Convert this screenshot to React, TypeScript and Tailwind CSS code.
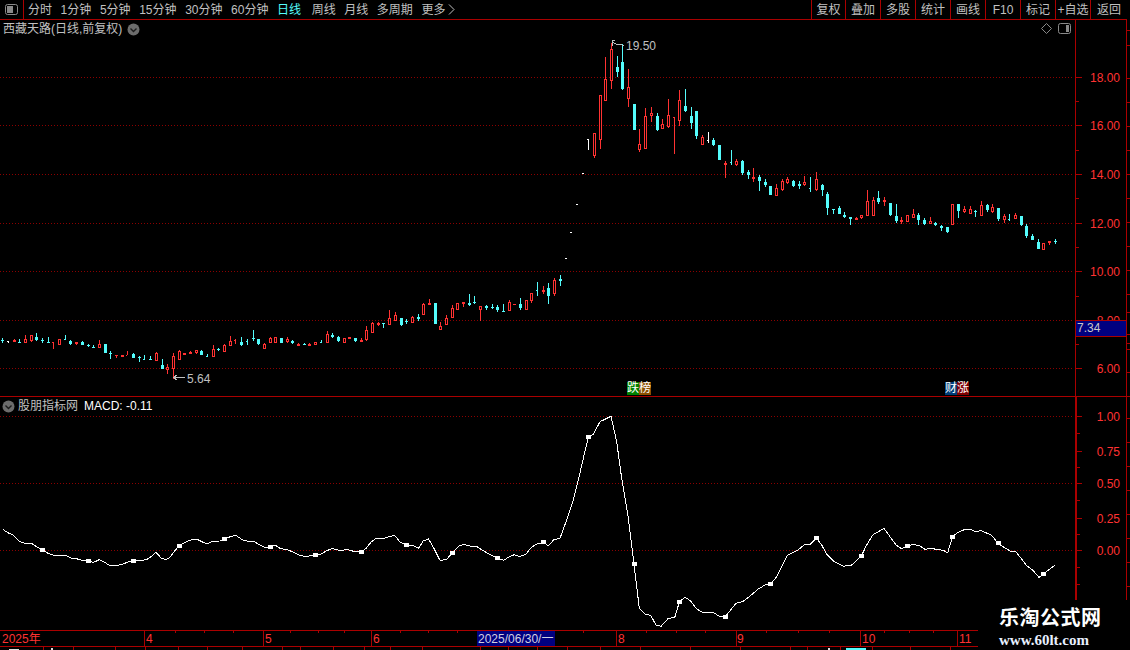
type Kind = 'r' | 'c' | 'w' | 'R' | 'C' | 'W';
type Row = [Kind, number, number, number, number];

const RED = '#ff3232';
const CYAN = '#54fcfc';
const LINE = '#aa0000';
const GRID = '#8c0000';
const GRAY = '#c0c0c0';
const fontStack = '"Liberation Sans", "Noto Sans CJK SC", sans-serif';

// [kind, wickTop, bodyTop, bodyBottom, wickBottom], measured at 3x from the top of each block
const blockA: Row[] = [
  ['c', 54, 60, 63, 68], ['W', 62, 62, 62, 70], ['r', 57, 59, 65, 65], ['c', 56, 66, 68, 68], ['r', 45, 57, 68, 69],
  ['r', 45, 45, 62, 67], ['c', 40, 51, 60, 62], ['c', 55, 59, 63, 68], ['c', 52, 65, 67, 67], ['R', 67, 67, 67, 87],
  ['r', 58, 58, 74, 74], ['C', 45, 58, 58, 60], ['c', 60, 62, 72, 75], ['r', 66, 66, 71, 75], ['c', 63, 65, 74, 75],
  ['c', 71, 74, 77, 81], ['c', 75, 80, 83, 83], ['r', 60, 72, 83, 84], ['c', 72, 72, 98, 98], ['c', 93, 99, 102, 117],
  ['r', 105, 105, 109, 113], ['r', 106, 106, 110, 110], ['R', 93, 105, 105, 105], ['c', 99, 102, 113, 114], ['c', 107, 110, 113, 125],
  ['C', 105, 118, 118, 120], ['c', 108, 116, 118, 118], ['r', 97, 100, 122, 123], ['c', 117, 134, 147, 147], ['r', 132, 141, 149, 162],
  ['r', 99, 108, 147, 178], ['r', 91, 93, 119, 120], ['r', 99, 99, 104, 104], ['r', 93, 96, 101, 101], ['r', 91, 91, 98, 103],
  ['c', 90, 93, 105, 106], ['C', 102, 108, 108, 110], ['r', 75, 88, 110, 111], ['c', 83, 87, 90, 93], ['r', 72, 75, 95, 96],
  ['r', 48, 63, 77, 78], ['R', 58, 60, 60, 71], ['c', 51, 65, 75, 77], ['C', 57, 64, 64, 74], ['c', 30, 53, 57, 63],
  ['c', 57, 57, 72, 75], ['r', 70, 72, 86, 87], ['r', 52, 54, 68, 70], ['r', 52, 52, 68, 68],
];

const blockB: Row[] = [
  ['c', 234, 234, 248, 248], ['r', 232, 237, 246, 250], ['c', 240, 242, 248, 252], ['r', 250, 252, 258, 258], ['c', 249, 252, 255, 255],
  ['r', 250, 252, 258, 258], ['r', 247, 247, 255, 255], ['C', 240, 246, 246, 248], ['r', 213, 222, 248, 249], ['c', 219, 225, 230, 234],
  ['c', 228, 230, 243, 246], ['r', 234, 234, 248, 248], ['r', 231, 231, 236, 236], ['c', 234, 234, 243, 246], ['r', 234, 240, 246, 246],
  ['r', 197, 210, 240, 243], ['r', 186, 189, 218, 219], ['r', 186, 188, 194, 198], ['c', 189, 189, 191, 204], ['r', 150, 175, 194, 195],
  ['r', 156, 165, 182, 183], ['c', 174, 174, 195, 198], ['c', 177, 182, 186, 192], ['r', 168, 171, 188, 188], ['c', 162, 170, 177, 182],
  ['r', 129, 132, 164, 165], ['r', 117, 129, 134, 134], ['c', 129, 129, 191, 191], ['r', 186, 198, 209, 209], ['r', 165, 174, 194, 195],
  ['r', 135, 144, 173, 174], ['r', 129, 129, 149, 149], ['r', 126, 126, 131, 141], ['c', 102, 129, 135, 137], ['c', 108, 126, 130, 132],
  ['r', 138, 138, 149, 183], ['c', 135, 138, 145, 150], ['c', 132, 141, 144, 147], ['c', 135, 140, 150, 156], ['c', 132, 152, 154, 156],
  ['r', 120, 126, 152, 153], ['r', 131, 131, 135, 135], ['c', 114, 132, 144, 150], ['r', 120, 120, 150, 150], ['r', 99, 99, 123, 129],
  ['C', 66, 91, 91, 108], ['r', 78, 90, 96, 102], ['c', 69, 84, 108, 132], ['r', 54, 60, 102, 108], ['c', 45, 57, 62, 78],
];

const blockC: Row[] = [
  ['w', 684, 684, 685, 685], ['w', 606, 606, 607, 607], ['w', 522, 522, 523, 523], ['w', 429, 429, 430, 430], ['W', 327, 327, 327, 360],
  ['r', 310, 310, 377, 383], ['r', 196, 196, 331, 357], ['r', 81, 148, 212, 212], ['r', 40, 57, 152, 177], ['c', 78, 111, 125, 142],
  ['c', 42, 96, 178, 180], ['r', 117, 172, 208, 231], ['c', 222, 222, 300, 300], ['r', 297, 343, 359, 366], ['r', 234, 259, 356, 357],
  ['r', 232, 249, 257, 276], ['c', 250, 258, 301, 303], ['r', 267, 283, 296, 297], ['r', 207, 256, 291, 293], ['R', 262, 262, 262, 372],
  ['r', 180, 211, 272, 288], ['c', 177, 228, 243, 246], ['c', 231, 258, 279, 297], ['c', 243, 243, 318, 327], ['r', 316, 321, 344, 345],
  ['W', 306, 331, 331, 339], ['c', 324, 331, 345, 348], ['c', 345, 345, 390, 390], ['r', 393, 399, 404, 444], ['C', 360, 397, 397, 405],
  ['r', 387, 393, 405, 408], ['c', 390, 393, 429, 435], ['c', 420, 426, 435, 447], ['r', 414, 441, 447, 456], ['c', 435, 441, 453, 483],
  ['c', 447, 456, 465, 471], ['c', 468, 468, 495, 495], ['r', 462, 474, 498, 498], ['r', 447, 453, 480, 483], ['r', 441, 447, 459, 462],
  ['c', 450, 453, 468, 471], ['c', 453, 462, 468, 477], ['r', 438, 456, 465, 468],
];

const blockD: Row[] = [
  ['C', 50, 85, 85, 96], ['r', 36, 57, 90, 93], ['c', 72, 75, 90, 108], ['c', 96, 102, 144, 165], ['c', 147, 147, 150, 162],
  ['c', 138, 144, 162, 162], ['c', 156, 165, 171, 174], ['c', 171, 171, 177, 195], ['r', 171, 174, 180, 180], ['r', 165, 165, 174, 177],
  ['r', 90, 123, 168, 168], ['r', 111, 120, 168, 168], ['c', 93, 114, 126, 132], ['r', 111, 120, 126, 138], ['c', 129, 129, 165, 168],
  ['c', 132, 168, 183, 189], ['r', 171, 180, 186, 192], ['r', 165, 165, 186, 186], ['r', 147, 162, 174, 174], ['c', 159, 165, 180, 195],
  ['c', 174, 180, 192, 195], ['r', 171, 183, 192, 192], ['c', 186, 189, 194, 198], ['c', 195, 198, 204, 213], ['c', 201, 201, 216, 219],
  ['r', 132, 132, 195, 195], ['c', 132, 132, 153, 174], ['r', 138, 147, 156, 159], ['r', 138, 147, 162, 162], ['c', 150, 153, 156, 171],
  ['r', 123, 135, 168, 168], ['c', 132, 135, 150, 156], ['r', 132, 141, 156, 159], ['c', 144, 144, 177, 183], ['r', 162, 168, 180, 189],
  ['C', 162, 178, 178, 183], ['r', 159, 165, 177, 177], ['c', 168, 168, 195, 198], ['c', 192, 198, 228, 234], ['c', 222, 228, 240, 240],
  ['c', 237, 246, 267, 267], ['r', 249, 249, 270, 270], ['r', 243, 243, 250, 255], ['c', 237, 242, 246, 252],
];

const place = (rows: Row[], base: number) =>
  rows.map(([k, a, b, c, d]) => [k, base + a / 3, base + b / 3, base + c / 3, base + d / 3] as Row);

const candles: Row[] = [...place(blockA, 320), ...place(blockB, 260), ...place(blockC, 30), ...place(blockD, 160)];

const candleX = (i: number) => Math.round(2.2 + 5.69 * i);

const macdLeft = [
  [8, 58], [22, 68], [38, 76], [55, 95], [70, 100], [88, 100], [105, 112], [119, 120], [135, 130], [150, 136], [185, 136], [200, 145],
  [217, 147], [235, 152], [248, 153], [262, 157], [278, 149], [290, 155], [305, 165], [330, 166], [345, 162], [360, 155], [374, 153],
  [395, 152], [412, 148], [425, 138], [437, 127], [452, 145], [465, 149], [475, 143], [490, 122], [503, 105], [520, 96], [540, 88],
  [552, 88], [565, 95], [580, 102], [595, 94], [615, 93], [628, 87], [645, 80], [660, 76], [680, 90], [695, 94], [710, 94], [725, 103],
  [740, 112], [757, 111], [770, 105], [785, 116], [805, 119], [820, 126], [840, 136], [855, 140], [882, 135], [900, 132], [915, 122],
  [930, 116], [950, 121], [975, 119], [990, 124], [1011, 126], [1025, 115], [1040, 95], [1055, 84], [1075, 85], [1090, 80], [1105, 76],
  [1120, 96], [1137, 105], [1155, 106], [1172, 115], [1185, 93], [1200, 87], [1215, 115], [1232, 151], [1250, 149], [1267, 128],
  [1285, 108], [1298, 103], [1315, 108], [1333, 108], [1350, 120], [1370, 133], [1393, 144], [1410, 151], [1425, 141], [1440, 134],
  [1455, 140], [1473, 132], [1485, 115], [1500, 103], [1522, 97], [1535, 108], [1550, 90], [1565, 85],
].map(([x, y]) => [x / 2.8, 510 + y / 3]);

const macdRight = [
  [0, 400], [20, 345], [40, 285], [55, 225], [70, 160], [85, 96], [100, 88], [120, 50], [153, 34], [170, 110], [185, 220], [205, 340],
  [223, 486], [238, 610], [255, 627], [272, 631], [288, 660], [303, 664], [325, 640], [344, 638], [359, 588], [376, 577], [392, 588],
  [410, 612], [428, 622], [460, 622], [478, 634], [496, 635], [528, 595], [548, 590], [570, 573], [595, 552], [615, 540], [631, 539],
  [650, 515], [682, 451], [715, 434], [735, 418], [750, 418], [769, 399], [785, 420], [800, 447], [820, 468], [850, 484], [875, 480],
  [904, 453], [920, 420], [938, 390], [972, 370], [990, 395], [1008, 420], [1025, 431], [1042, 423], [1060, 418], [1078, 422],
  [1095, 433], [1110, 430], [1130, 433], [1150, 436], [1163, 444], [1178, 393], [1195, 382], [1215, 373], [1232, 373], [1248, 381],
  [1262, 376], [1295, 391], [1315, 416], [1350, 438], [1367, 439], [1400, 482], [1418, 495], [1437, 517], [1450, 507], [1470, 492],
  [1484, 481],
].map(([x, y]) => [560 + x / 3, 405 + y / 3]);

const macd = [...macdLeft, ...macdRight];

const macdAt = (x: number) => {
  for (let i = 1; i < macd.length; i++) {
    const [x0, y0] = macd[i - 1];
    const [x1, y1] = macd[i];
    if (x <= x1) return y0 + ((x - x0) / (x1 - x0)) * (y1 - y0);
  }
  return macd[macd.length - 1][1];
};

const markers = Array.from({ length: 23 }, (_, k) => 42.5 + 45.5 * k);

const leftTabs = ['分时', '1分钟', '5分钟', '15分钟', '30分钟', '60分钟', '日线', '周线', '月线', '多周期'];
const rightTabs = [
  { label: '复权', w: 'w-[34px]' },
  { label: '叠加', w: 'w-[35px]' },
  { label: '多股', w: 'w-[35px]' },
  { label: '统计', w: 'w-[35px]' },
  { label: '画线', w: 'w-[35px]' },
  { label: 'F10', w: 'w-[35px]' },
  { label: '标记', w: 'w-[35px]' },
  { label: '+自选', w: 'w-[35px]' },
  { label: '返回', w: 'w-[37px]' },
];

const priceGrid = [
  { y: 77, label: '18.00' },
  { y: 125, label: '16.00' },
  { y: 174, label: '14.00' },
  { y: 223, label: '12.00' },
  { y: 271, label: '10.00' },
  { y: 320, label: '8.00' },
  { y: 368, label: '6.00' },
];
const priceMinor = [101, 150, 198, 247, 296, 344];
const macdTicks = [
  { y: 416, label: '1.00', grid: true },
  { y: 451, label: '0.75', grid: false },
  { y: 483, label: '0.50', grid: true },
  { y: 518, label: '0.25', grid: false },
  { y: 550, label: '0.00', grid: true },
];
const macdMinor = [433, 467, 500, 534, 567, 584, 601, 618];

const months = [
  { x: 144, label: '4', tx: 146 },
  { x: 263, label: '5', tx: 265 },
  { x: 371, label: '6', tx: 373 },
  { x: 616, label: '8', tx: 618 },
  { x: 736, label: '9', tx: 737 },
  { x: 860, label: '10', tx: 862 },
  { x: 957, label: '11', tx: 959 },
];
const dayTicks = [175, 204, 233, 290, 318, 344, 400, 428, 457, 583, 646, 676, 705, 766, 798, 829, 884, 909, 933];
const stripTicks = [43, 73, 115, 145, 178, 207, 242, 282, 300, 333, 364, 390, 422, 480, 508, 537, 567, 600, 640, 690, 740, 790, 807, 840, 872, 910, 950];
const edgeTicks = [30, 45, 78, 102, 126, 150, 174, 198, 222, 246, 270, 294, 312, 334, 343, 349, 372, 396];
const edgeTicksLow = [418, 442, 466, 490, 514, 538, 562, 586];

const dotted = (y: number) =>
  Array.from({ length: 358 }, (_, k) => `M${k * 3} ${y + 0.5}h1`).join('');

function Candle({ row, i }: { row: Row; i: number }) {
  const [k, wt, bt, bb, wb] = row;
  const x = candleX(i);
  const color = k === 'r' || k === 'R' ? RED : k === 'c' || k === 'C' ? CYAN : '#ffffff';
  const wickTop = Math.round(wt);
  const bodyTop = Math.round(bt);
  const bodyH = Math.max(1, Math.round(bb) - bodyTop);
  const wickH = Math.max(0, Math.round(wb) - wickTop);
  if (k === 'R' || k === 'C' || k === 'W') {
    return (
      <g fill={color}>
        <rect x={x} y={wickTop} width={1} height={wickH} />
        <rect x={x - 1} y={bodyTop} width={1} height={1} />
      </g>
    );
  }
  if (k === 'w') return <rect x={x - 1} y={bodyTop} width={2} height={1} fill={color} />;
  return (
    <g fill={color}>
      <rect x={x} y={wickTop} width={1} height={wickH} />
      <rect x={x - 1} y={bodyTop} width={3} height={bodyH} />
      {k === 'r' && bodyH >= 3 && <rect x={x} y={bodyTop + 1} width={1} height={bodyH - 2} fill="#000000" />}
    </g>
  );
}

function CircleChevron() {
  return (
    <svg width="13" height="13" viewBox="0 0 13 13" className="shrink-0">
      <circle cx="6.5" cy="6.5" r="6" fill="#6c6c6c" />
      <path d="M3.5 5.5 L6.5 8.5 L9.5 5.5" fill="none" stroke="#1c1c1c" strokeWidth="1.4" />
    </svg>
  );
}

function PanelToggle({ side }: { side: 'left' | 'right' }) {
  return (
    <svg width="13" height="11" viewBox="0 0 13 11" className="shrink-0">
      <rect x="0.5" y="0.5" width="12" height="10" rx="2" fill="none" stroke="#8a8a8a" />
      {side === 'left' ? <rect x="2" y="2" width="6" height="7" fill="#8a8a8a" /> : <rect x="8" y="2" width="3" height="7" fill="#8a8a8a" />}
    </svg>
  );
}

function Tag({ left, right, leftBg, rightBg }: { left: string; right: string; leftBg: string; rightBg: string }) {
  return (
    <div className="flex text-[12px] leading-[13px] text-white">
      <span className={leftBg}>{left}</span>
      <span className={rightBg}>{right}</span>
    </div>
  );
}

function EdgeTicks({ ys, top, height }: { ys: number[]; top: number; height: number }) {
  return (
    <svg width="3" height={height} viewBox={`0 ${top} 3 ${height}`} className="block shrink-0">
      {ys.map((y) => (
        <rect key={y} x="0" y={y} width="3" height="1" fill={LINE} />
      ))}
    </svg>
  );
}

export default function App() {
  return (
    <div
      className="relative flex h-[650px] w-[1130px] flex-col overflow-hidden bg-black text-[12px] text-[#c0c0c0]"
      style={{ fontFamily: fontStack }}
    >
      {/* toolbar */}
      <div className="flex h-[20px] w-[1127px] shrink-0 items-stretch border-b border-[#aa0000]">
        <div className="flex w-[24px] items-center justify-center border-r border-[#aa0000]">
          <PanelToggle side="left" />
        </div>
        <div className="ml-[4px] flex items-center gap-[8.6px] leading-none">
          {leftTabs.map((t) => (
            <span key={t} className={t === '日线' ? 'text-[#54fcfc]' : t === '周线' ? 'ml-[2px]' : ''}>
              {t}
            </span>
          ))}
          <span className="flex items-center gap-[3px]">
            更多
            <svg width="7" height="11" viewBox="0 0 7 11">
              <path d="M1 0.5 L6 5.5 L1 10.5" fill="none" stroke="#c0c0c0" />
            </svg>
          </span>
        </div>
        <div className="ml-auto flex">
          {rightTabs.map((t) => (
            <div key={t.label} className={`flex items-center justify-center border-l border-[#aa0000] leading-none ${t.w}`}>
              {t.label}
            </div>
          ))}
        </div>
      </div>

      {/* price panel */}
      <div className="relative flex h-[377px] shrink-0 border-b border-[#aa0000]">
        <svg width="1075" height="376" viewBox="0 20 1075 376" className="block shrink-0" shapeRendering="crispEdges">
          <path d={priceGrid.map((g) => dotted(g.y)).join('')} stroke={GRID} fill="none" />
          {candles.map((row, i) => (
            <Candle key={i} row={row} i={i} />
          ))}
          <g fill="none" stroke={GRAY}>
            <path d="M612 40.5 H615 M612 40.5 V45.5 M612.5 42.5 L616 44 L621 44.5 L624 46" />
            <path d="M173 377.5 H185 M173.5 377.5 L177 375 M173.5 377.5 L177 380" />
          </g>
          <g fill={GRAY} fontSize="12" fontFamily={fontStack} shapeRendering="auto">
            <text x="626" y="50">19.50</text>
            <text x="187" y="383">5.64</text>
          </g>
        </svg>
        <div className="relative w-[52px] shrink-0 border-x border-[#aa0000]">
          <svg width="50" height="376" viewBox="1076 20 50 376" className="block" shapeRendering="crispEdges">
            {priceGrid.map((g) => (
              <rect key={g.y} x="1076" y={g.y} width="6" height="1" fill={LINE} />
            ))}
            {priceMinor.map((y) => (
              <rect key={y} x="1076" y={y} width="3" height="1" fill={LINE} />
            ))}
            <g fill={RED} fontSize="12" fontFamily={fontStack} textAnchor="end" shapeRendering="auto">
              {priceGrid.map((g) => (
                <text key={g.y} x="1120" y={g.y + 5}>
                  {g.label}
                </text>
              ))}
            </g>
          </svg>
          <div className="absolute inset-x-0 top-[300px] h-[17px] border-y border-[#aa0000] bg-[#000080] pl-[1px] text-[12px] leading-[15px] text-[#c8c8c8]">
            7.34
          </div>
        </div>
        <EdgeTicks ys={edgeTicks} top={20} height={376} />

        <div className="absolute left-[3px] top-[2px] flex items-center gap-[5px] leading-[14px]">
          <span>西藏天路(日线,前复权)</span>
          <CircleChevron />
        </div>
        <div className="absolute left-[1041px] top-[3px] flex items-center gap-[6px]">
          <svg width="11" height="11" viewBox="0 0 11 11" className="shrink-0">
            <path d="M5.5 0.5 L10.5 5.5 L5.5 10.5 L0.5 5.5 Z" fill="none" stroke="#8a8a8a" />
          </svg>
          <PanelToggle side="right" />
        </div>
        <div className="absolute left-[627px] top-[362px]">
          <Tag left="跌" right="榜" leftBg="bg-[#008000]" rightBg="bg-[#8c5000]" />
        </div>
        <div className="absolute left-[945px] top-[362px]">
          <Tag left="财" right="涨" leftBg="bg-[#003c78]" rightBg="bg-[#800000]" />
        </div>
      </div>

      {/* macd panel */}
      <div className="relative flex h-[233px] shrink-0">
        <svg width="1075" height="233" viewBox="0 397 1075 233" className="block shrink-0" shapeRendering="crispEdges">
          <path d={macdTicks.filter((t) => t.grid).map((t) => dotted(t.y)).join('')} stroke={GRID} fill="none" />
          <polyline points={macd.map(([x, y]) => `${x},${y}`).join(' ')} fill="none" stroke="#ffffff" />
          {markers.map((x) => (
            <rect key={x} x={Math.round(x - 2.5)} y={Math.round(macdAt(x) - 2)} width="5" height="4" fill="#ffffff" />
          ))}
        </svg>
        <div className="w-[52px] shrink-0 border-r border-l-2 border-[#aa0000]">
          <svg width="49" height="233" viewBox="1077 397 49 233" className="block" shapeRendering="crispEdges">
            {macdTicks.map((t) => (
              <rect key={t.y} x="1077" y={t.y} width="5" height="1" fill={LINE} />
            ))}
            {macdMinor.map((y) => (
              <rect key={y} x="1077" y={y} width="3" height="1" fill={LINE} />
            ))}
            <g fill={RED} fontSize="12" fontFamily={fontStack} textAnchor="end" shapeRendering="auto">
              {macdTicks.map((t) => (
                <text key={t.y} x="1120" y={t.y + 5}>
                  {t.label}
                </text>
              ))}
            </g>
          </svg>
        </div>
        <EdgeTicks ys={edgeTicksLow} top={397} height={233} />
        <div className="absolute left-[2px] top-[2px] flex items-center leading-[14px]">
          <CircleChevron />
          <span className="ml-[3px]">股朋指标网</span>
          <span className="ml-[6px] text-white">MACD: -0.11</span>
        </div>
      </div>

      {/* time axis */}
      <div className="h-[17px] shrink-0 border-y border-[#aa0000]">
        <svg width="1130" height="15" viewBox="0 631 1130 15" className="block" shapeRendering="crispEdges">
          {months.map((m) => (
            <rect key={m.x} x={m.x} y="631" width="1" height="15" fill={LINE} />
          ))}
          {dayTicks.map((x) => (
            <rect key={x} x={x} y="631" width="1" height="2" fill={LINE} />
          ))}
          <rect x="477" y="631" width="78" height="15" fill="#000080" />
          <g fontSize="12" fontFamily={fontStack} shapeRendering="auto">
            <text x="2" y="643" fill={RED}>2025年</text>
            {months.map((m) => (
              <text key={m.x} x={m.tx} y="643" fill={RED}>
                {m.label}
              </text>
            ))}
            <text x="478" y="643" fill="#d0d0e0">2025/06/30/一</text>
          </g>
        </svg>
      </div>

      {/* status strip, cut off by the window */}
      <svg width="1130" height="3" viewBox="0 647 1130 3" className="block shrink-0" shapeRendering="crispEdges">
        {stripTicks.map((x) => (
          <rect key={x} x={x} y="647" width="1" height="3" fill={LINE} />
        ))}
        <rect x="9" y="649" width="10" height="1" fill="#e0e0e0" />
        <rect x="51" y="648" width="2" height="2" fill="#e0e0e0" />
        <rect x="828" y="648" width="2" height="2" fill="#e0e0e0" />
        <rect x="846" y="648" width="20" height="2" fill={CYAN} />
      </svg>

      {/* watermark */}
      <div className="absolute bottom-0 right-0 flex h-[50px] w-[152px] flex-col bg-black pl-[21px] pt-[7px]">
        <span className="text-[20px] font-bold leading-[22px] tracking-[0.5px] text-white">乐淘公式网</span>
        <span
          className="mt-[3px] text-[15px] font-bold leading-[16px] text-[#e8f0ff]"
          style={{ fontFamily: '"Liberation Serif", serif' }}
        >
          www.60lt.com
        </span>
      </div>
    </div>
  );
}
